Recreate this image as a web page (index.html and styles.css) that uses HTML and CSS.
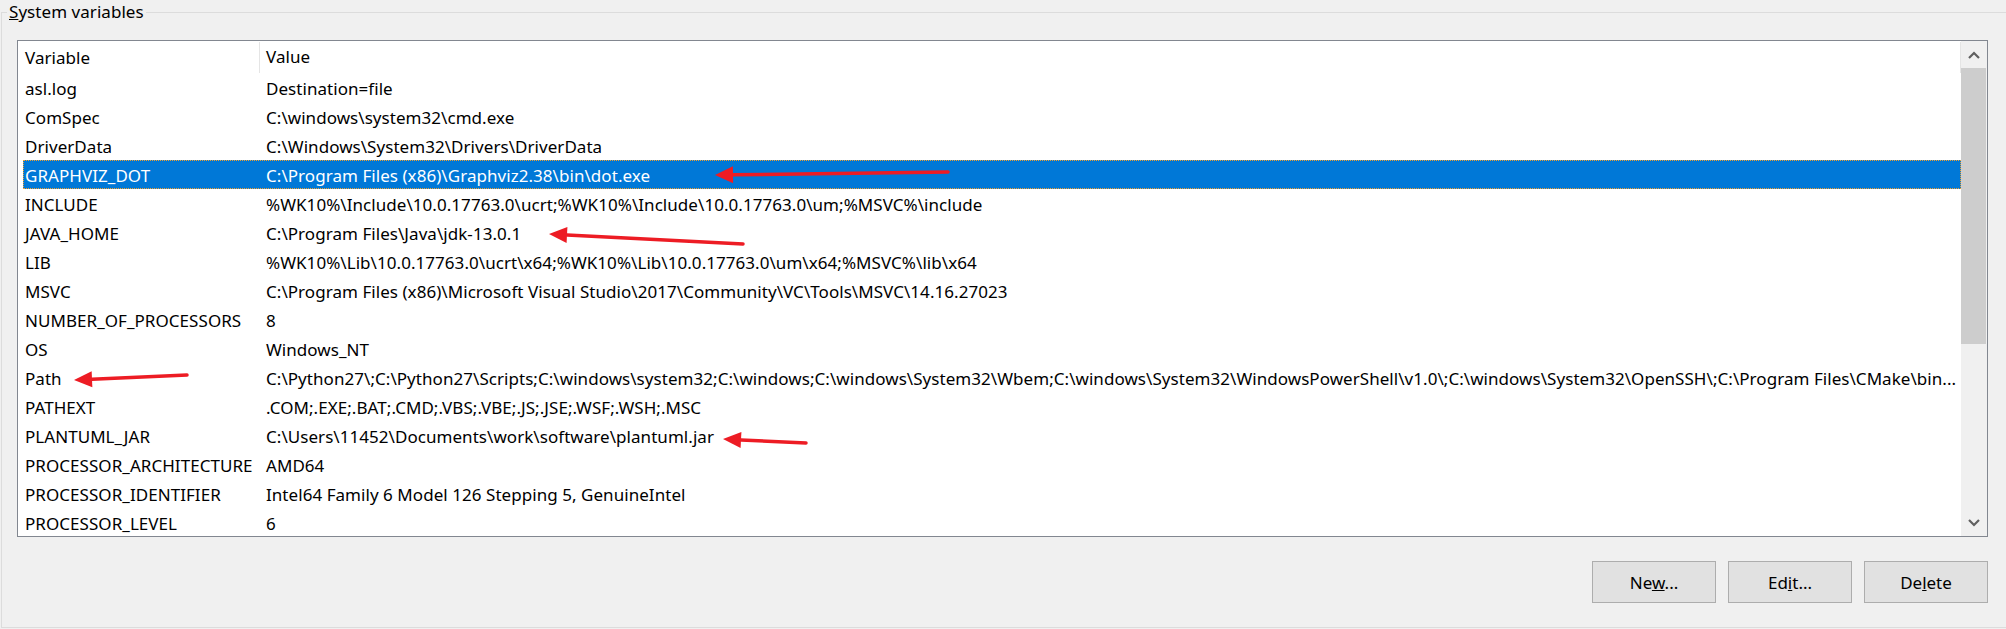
FILE: index.html
```html
<!DOCTYPE html>
<html>
<head>
<meta charset="utf-8">
<link rel="stylesheet" href="styles.css">
</head>
<body>
<fieldset class="group">
  <legend class="group-title"><u>S</u>ystem variables</legend>
  <div class="group-body">
    <div class="listbox">
      <div class="list-main">
        <div class="list-header">
          <div class="hcell hcell-name">Variable</div>
          <div class="hcell hcell-value">Value</div>
        </div>
        <div class="list-rows">
          <div class="row"><div class="cell-name">asl.log</div><div class="cell-value">Destination=file</div></div>
          <div class="row"><div class="cell-name">ComSpec</div><div class="cell-value">C:\windows\system32\cmd.exe</div></div>
          <div class="row"><div class="cell-name">DriverData</div><div class="cell-value">C:\Windows\System32\Drivers\DriverData</div></div>
          <div class="row selected"><div class="cell-name">GRAPHVIZ_DOT</div><div class="cell-value">C:\Program Files (x86)\Graphviz2.38\bin\dot.exe</div></div>
          <div class="row"><div class="cell-name">INCLUDE</div><div class="cell-value">%WK10%\Include\10.0.17763.0\ucrt;%WK10%\Include\10.0.17763.0\um;%MSVC%\include</div></div>
          <div class="row"><div class="cell-name">JAVA_HOME</div><div class="cell-value">C:\Program Files\Java\jdk-13.0.1</div></div>
          <div class="row"><div class="cell-name">LIB</div><div class="cell-value">%WK10%\Lib\10.0.17763.0\ucrt\x64;%WK10%\Lib\10.0.17763.0\um\x64;%MSVC%\lib\x64</div></div>
          <div class="row"><div class="cell-name">MSVC</div><div class="cell-value">C:\Program Files (x86)\Microsoft Visual Studio\2017\Community\VC\Tools\MSVC\14.16.27023</div></div>
          <div class="row"><div class="cell-name">NUMBER_OF_PROCESSORS</div><div class="cell-value">8</div></div>
          <div class="row"><div class="cell-name">OS</div><div class="cell-value">Windows_NT</div></div>
          <div class="row"><div class="cell-name">Path</div><div class="cell-value">C:\Python27\;C:\Python27\Scripts;C:\windows\system32;C:\windows;C:\windows\System32\Wbem;C:\windows\System32\WindowsPowerShell\v1.0\;C:\windows\System32\OpenSSH\;C:\Program Files\CMake\bin...</div></div>
          <div class="row"><div class="cell-name">PATHEXT</div><div class="cell-value">.COM;.EXE;.BAT;.CMD;.VBS;.VBE;.JS;.JSE;.WSF;.WSH;.MSC</div></div>
          <div class="row"><div class="cell-name">PLANTUML_JAR</div><div class="cell-value">C:\Users\11452\Documents\work\software\plantuml.jar</div></div>
          <div class="row"><div class="cell-name">PROCESSOR_ARCHITECTURE</div><div class="cell-value">AMD64</div></div>
          <div class="row"><div class="cell-name">PROCESSOR_IDENTIFIER</div><div class="cell-value">Intel64 Family 6 Model 126 Stepping 5, GenuineIntel</div></div>
          <div class="row"><div class="cell-name">PROCESSOR_LEVEL</div><div class="cell-value">6</div></div>
        </div>
      </div>
      <div class="scrollbar">
        <div class="sb-btn">
          <svg width="12" height="8" viewBox="0 0 12 8"><polyline points="1,7 6,2 11,7" fill="none" stroke="#606060" stroke-width="2.2"/></svg>
        </div>
        <div class="sb-thumb"></div>
        <div class="sb-track"></div>
        <div class="sb-btn">
          <svg width="12" height="8" viewBox="0 0 12 8"><polyline points="1,1 6,6 11,1" fill="none" stroke="#606060" stroke-width="2.2"/></svg>
        </div>
      </div>
    </div>
    <div class="buttons">
      <button class="btn">Ne<u>w</u>...</button>
      <button class="btn">Ed<u>i</u>t...</button>
      <button class="btn">De<u>l</u>ete</button>
    </div>
  </div>
</fieldset>

<svg class="annotations" width="2006" height="629" viewBox="0 0 2006 629">
  <g fill="#ed1c24" stroke="#ed1c24">
    <line x1="948" y1="172" x2="733" y2="174.8" stroke-width="3.5" stroke-linecap="round"/>
    <polygon points="715,175 733.1,183.3 732.9,166.3" stroke="none"/>
    <line x1="743" y1="244" x2="567" y2="234.9" stroke-width="3.5" stroke-linecap="round"/>
    <polygon points="549,234 567.4,226.9 566.6,242.9" stroke="none"/>
    <line x1="187" y1="375" x2="92" y2="379.2" stroke-width="3.5" stroke-linecap="round"/>
    <polygon points="74,380 92.35,387.2 91.65,371.2" stroke="none"/>
    <line x1="806" y1="443" x2="741" y2="439.9" stroke-width="3.5" stroke-linecap="round"/>
    <polygon points="723,439 740.6,447.9 741.4,431.9" stroke="none"/>
  </g>
</svg>
</body>
</html>
```

FILE: styles.css
```css
html, body {
  margin: 0;
  padding: 0;
}

body {
  width: 2006px;
  height: 629px;
  overflow: hidden;
  position: relative;
  background: #f0f0f0;
  font-family: "Noto Sans", "Open Sans", sans-serif;
  font-size: 17px;
  letter-spacing: 0.05px;
  color: #000;
}

.group {
  margin: 0 0 0 1px;
  padding: 0;
  border: 1px solid #dcdcdc;
  width: 2030px;
  box-sizing: border-box;
  min-width: 0;
}

.group-title {
  margin-left: 5px;
  padding: 0 2px;
  line-height: 24px;
  font-size: 17px;
  color: #000;
}

.group-body {
  padding: 16px 0 24px 15px;
}

.listbox {
  width: 1971px;
  height: 497px;
  box-sizing: border-box;
  border: 1px solid #828790;
  background: #fff;
  display: flex;
  overflow: hidden;
}

.list-main {
  flex: 1;
  min-width: 0;
  display: flex;
  flex-direction: column;
  overflow: hidden;
}

.list-header {
  height: 32px;
  flex: none;
  display: grid;
  grid-template-columns: 236px 1fr;
  padding-left: 5px;
  align-items: stretch;
}

.hcell {
  line-height: 32px;
  white-space: nowrap;
}

.hcell-name {
  padding-left: 2px;
  padding-top: 1px;
}

.hcell-value {
  padding-left: 6px;
  border-left: 1px solid #e5e5e5;
  border-right: 1px solid #e5e5e5;
  margin: 1px 0 1px 0;
  line-height: 30px;
}

.list-rows {
  flex: 1;
  overflow: hidden;
}

.row {
  height: 29px;
  box-sizing: border-box;
  padding-top: 1px;
  line-height: 29px;
  margin-left: 5px;
  display: grid;
  grid-template-columns: 236px 1fr;
  white-space: nowrap;
}

.cell-name {
  padding-left: 2px;
  overflow: hidden;
}

.cell-value {
  padding-left: 7px;
  overflow: hidden;
}

.row.selected {
  background: #0078d7;
  color: #fff;
  outline: 1px dotted #f0a030;
  outline-offset: -1px;
}

.scrollbar {
  width: 26px;
  flex: none;
  background: #f0f0f0;
  display: flex;
  flex-direction: column;
}

.sb-btn {
  height: 27px;
  flex: none;
  display: flex;
  align-items: center;
  justify-content: center;
}

.sb-thumb {
  height: 276px;
  flex: none;
  margin: 0 1px 0 0;
  background: #cdcdcd;
}

.sb-track {
  flex: 1;
}

.buttons {
  width: 1971px;
  margin-top: 24px;
  display: flex;
  justify-content: flex-end;
  gap: 12px;
}

.btn {
  width: 124px;
  height: 42px;
  box-sizing: border-box;
  background: #e1e1e1;
  border: 1px solid #adadad;
  border-radius: 0;
  font-family: "Noto Sans", "Open Sans", sans-serif;
  font-size: 17px;
  color: #000;
  padding: 0;
}

.annotations {
  position: absolute;
  left: 0;
  top: 0;
  pointer-events: none;
}
```
